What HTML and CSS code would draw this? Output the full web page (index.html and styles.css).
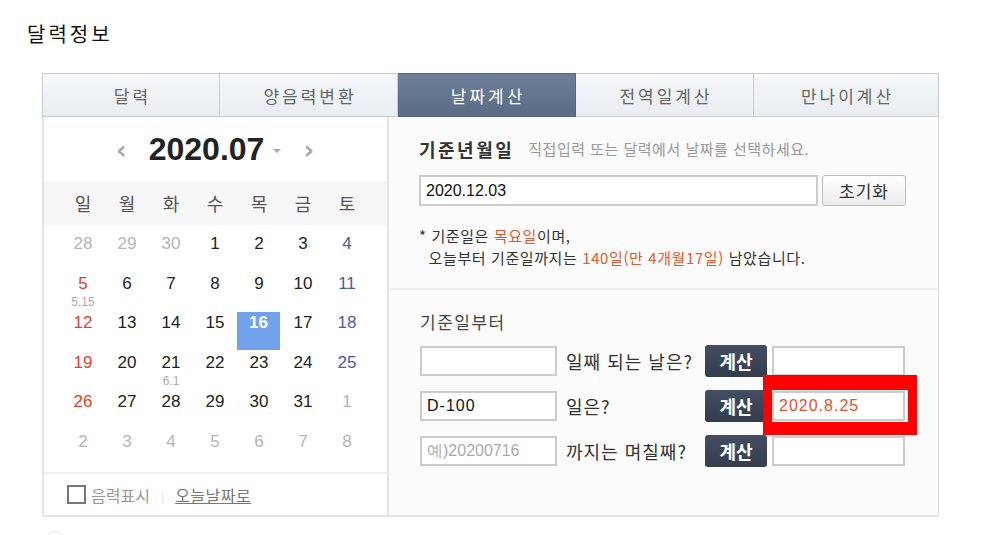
FILE: index.html
```html
<!DOCTYPE html>
<html lang="ko">
<head>
<meta charset="utf-8">
<title>달력정보</title>
<link rel="stylesheet" href="styles.css">
</head>
<body>
<h2 class="page-title">달력정보</h2>
<div class="widget">
  <div class="tabs">
    <div class="tab">달력</div>
    <div class="tab">양음력변환</div>
    <div class="tab active">날짜계산</div>
    <div class="tab">전역일계산</div>
    <div class="tab last">만나이계산</div>
  </div>
  <div class="body">
    <div class="cal">
      <div class="cal-head">
        <span class="arrow">&#8249;</span>
        <span class="ym">2020.07</span>
        <span class="drop"></span>
        <span class="arrow">&#8250;</span>
      </div>
      <div class="week">
        <span>일</span><span>월</span><span>화</span><span>수</span><span>목</span><span>금</span><span>토</span>
      </div>
      <div class="days">
        <div class="d other">28</div><div class="d other">29</div><div class="d other">30</div><div class="d">1</div><div class="d">2</div><div class="d">3</div><div class="d sat">4</div>
        <div class="d sun">5<small>5.15</small></div><div class="d">6</div><div class="d">7</div><div class="d">8</div><div class="d">9</div><div class="d">10</div><div class="d sat">11</div>
        <div class="d sun">12</div><div class="d">13</div><div class="d">14</div><div class="d">15</div><div class="d today">16</div><div class="d">17</div><div class="d sat">18</div>
        <div class="d sun">19</div><div class="d">20</div><div class="d">21<small>6.1</small></div><div class="d">22</div><div class="d">23</div><div class="d">24</div><div class="d sat">25</div>
        <div class="d sun">26</div><div class="d">27</div><div class="d">28</div><div class="d">29</div><div class="d">30</div><div class="d">31</div><div class="d other">1</div>
        <div class="d other">2</div><div class="d other">3</div><div class="d other">4</div><div class="d other">5</div><div class="d other">6</div><div class="d other">7</div><div class="d other">8</div>
      </div>
      <div class="cal-foot">
        <span class="check"></span>
        <span class="lunar">음력표시</span>
        <span class="sep">|</span>
        <span class="todaylink">오늘날짜로</span>
      </div>
    </div>
    <div class="calc">
      <div class="base">
        <div class="base-title"><strong>기준년월일</strong><span class="hint">직접입력 또는 달력에서 날짜를 선택하세요.</span></div>
        <div class="base-row">
          <div class="field wide">2020.12.03</div>
          <div class="reset">초기화</div>
        </div>
        <p class="note">* 기준일은 <em>목요일</em>이며,<br>&nbsp;&nbsp;오늘부터 기준일까지는 <em>140일(만 4개월17일)</em> 남았습니다.</p>
      </div>
      <div class="from">
        <div class="from-title">기준일부터</div>
        <div class="row">
          <div class="field small"></div>
          <span class="q">일째 되는 날은?</span>
          <div class="btn">계산</div>
          <div class="field result"></div>
        </div>
        <div class="row">
          <div class="field small">D-100</div>
          <span class="q">일은?</span>
          <div class="btn">계산</div>
          <div class="result-wrap">
            <div class="field result red">2020.8.25</div>
            <div class="mark"></div>
          </div>
        </div>
        <div class="row">
          <div class="field small ph">예)20200716</div>
          <span class="q">까지는 며칠째?</span>
          <div class="btn">계산</div>
          <div class="field result"></div>
        </div>
      </div>
    </div>
  </div>
</div>
<div class="ghost"></div>
</body>
</html>
```

FILE: styles.css
```css
* { box-sizing: border-box; }
html, body { margin: 0; padding: 0; background: #fff; overflow: hidden; }
body {
  width: 989px; height: 535px;
  font-family: "Noto Sans CJK KR", "Liberation Sans", sans-serif;
  color: #333;
}
.page-title {
  margin: 0;
  padding: 21px 0 0 27px;
  height: 73px;
  font-size: 20px;
  font-weight: normal;
  letter-spacing: 3px;
  line-height: 26px;
  color: #111;
}
.widget { margin-left: 42px; width: 897px; }
.tabs {
  display: flex;
  height: 44px;
}
.tab {
  width: 178px;
  border: 1px solid #c8cdd3;
  border-left: none;
  background: linear-gradient(#f6f8fa, #e9edf1);
  color: #666;
  font-size: 17px;
  letter-spacing: 3px;
  text-indent: 3px;
  display: flex; align-items: center; justify-content: center;
}
.tab:first-child { border-left: 1px solid #c8cdd3; }
.tab.last { width: 185px; }
.tab.active {
  background: linear-gradient(#6f819a, #5a6b84);
  border-color: #56667d;
  color: #fff;
}
.body {
  display: flex;
  height: 400px;
  border-bottom: 2px solid #e4e4e4;
}
.cal {
  width: 347px;
  border-left: 2px solid #e4e4e4;
  border-right: 2px solid #e4e4e4;
  background: #fff;
  display: flex; flex-direction: column;
}
.cal-head {
  height: 64px;
  display: flex; align-items: center;
  padding-left: 72px;
}
.arrow {
  font-family: "DejaVu Sans", sans-serif;
  font-size: 26px;
  color: #aaa;
  font-weight: bold;
  line-height: 1;
  margin-top: 2px;
}
.ym {
  font-family: "Liberation Sans", sans-serif;
  font-weight: bold;
  font-size: 32px;
  color: #222;
  margin: 0 9px 0 22px;
}
.drop {
  width: 0; height: 0;
  border-left: 4px solid transparent;
  border-right: 4px solid transparent;
  border-top: 4px solid #aaa;
  margin: 4px 22px 0 0;
}
.week {
  height: 44px;
  background: #f7f7f7;
  display: grid;
  grid-template-columns: repeat(7, 44px);
  padding-left: 17px;
  align-items: center;
  font-size: 18px;
  color: #555;
}
.week span { text-align: center; }
.days {
  display: grid;
  grid-template-columns: repeat(7, 44px);
  grid-auto-rows: 39.5px;
  padding: 8px 0 0 17px;
  height: 247px;
}
.d {
  font-family: "Liberation Sans", sans-serif;
  font-size: 17px;
  line-height: 22px;
  text-align: center;
  color: #222;
  display: flex; flex-direction: column; align-items: center;
}
.d small {
  font-size: 12px;
  line-height: 14px;
  color: #aaa;
}
.d.other { color: #b4b4b4; }
.d.sun { color: #e5412d; }
.d.sat { color: #4b5b9b; }
.d.today {
  background: #71a3ec;
  color: #fff;
  font-weight: bold;
  margin-right: 1px;
  height: 38px;
}
.cal-foot {
  border-top: 2px solid #f0f0f0;
  flex: 1;
  display: flex; align-items: center;
  padding-left: 23px;
  font-size: 16px;
}
.check {
  width: 19px; height: 19px;
  border: 2px solid #777;
  margin-right: 5px;
}
.lunar { color: #999; }
.sep { color: #ddd; font-size: 12px; margin: 0 11px; }
.todaylink { color: #777; text-decoration: underline; letter-spacing: 0.5px; }
.calc {
  flex: 1;
  background: #fbfbfb;
  border-right: 1px solid #dcdcdc;
  display: flex; flex-direction: column;
}
.base {
  padding: 21px 0 0 30px;
  height: 173px;
  border-bottom: 2px solid #efefef;
}
.base-title { line-height: 22px; display: flex; align-items: center; }
.base-title strong { font-size: 18px; color: #333; letter-spacing: 2.5px; }
.hint { color: #999; font-size: 15px; margin-left: 14px; letter-spacing: 0.5px; }
.base-row { display: flex; margin-top: 15px; height: 31px; }
.field {
  background: #fff;
  border: 2px solid #ccc;
  height: 30px;
  font-family: "Liberation Sans", sans-serif;
  font-size: 16px;
  line-height: 26px;
  padding-left: 5px;
  color: #111;
}
.field.wide { width: 399px; height: 31px; line-height: 27px; }
.reset {
  margin-left: 4px;
  width: 84px; height: 31px;
  border: 1px solid #bdbdbd;
  border-radius: 3px;
  background: linear-gradient(#fff, #ececec);
  font-size: 17px;
  letter-spacing: 1px;
  color: #333;
  display: flex; align-items: center; justify-content: center;
}
.note {
  margin: 19px 0 0 0;
  font-size: 15px;
  letter-spacing: 0.6px;
  line-height: 22px;
  color: #333;
}
.note em { font-style: normal; color: #e05a2b; }
.from { padding: 21px 0 0 31px; }
.from-title { font-size: 17px; letter-spacing: 1.5px; line-height: 22px; color: #444; }
.row {
  display: flex; align-items: center;
  height: 30px;
  margin-top: 15px;
}
.from-title + .row { margin-top: 13px; }
.field.small { width: 137px; letter-spacing: 1px; }
.field.ph { color: #aaa; letter-spacing: 0; }
.q {
  width: 139px;
  margin-left: 9px;
  font-size: 18px;
  color: #333;
  letter-spacing: 1px;
  white-space: nowrap;
}
.btn {
  width: 62px; height: 32px;
  background: linear-gradient(#444d61, #343c4e);
  border-radius: 3px;
  color: #fff;
  font-size: 18px;
  font-weight: bold;
  display: flex; align-items: center; justify-content: center;
}
.field.result { width: 133px; margin-left: 5px; }
.result-wrap { position: relative; margin-left: 5px; }
.result-wrap .field.result { margin-left: 0; }
.field.red { color: #e8502a; letter-spacing: 1px; }
.mark {
  position: absolute;
  left: -9px; top: -16px;
  width: 154px; height: 60px;
  border: 9px solid #ff0000;
  border-top-width: 15px;
  border-bottom-width: 13px;
}
.ghost {
  margin: 14px 0 0 46px;
  width: 18px; height: 18px;
  border-radius: 50%;
  border: 1px solid #e0e0e0;
}
```
